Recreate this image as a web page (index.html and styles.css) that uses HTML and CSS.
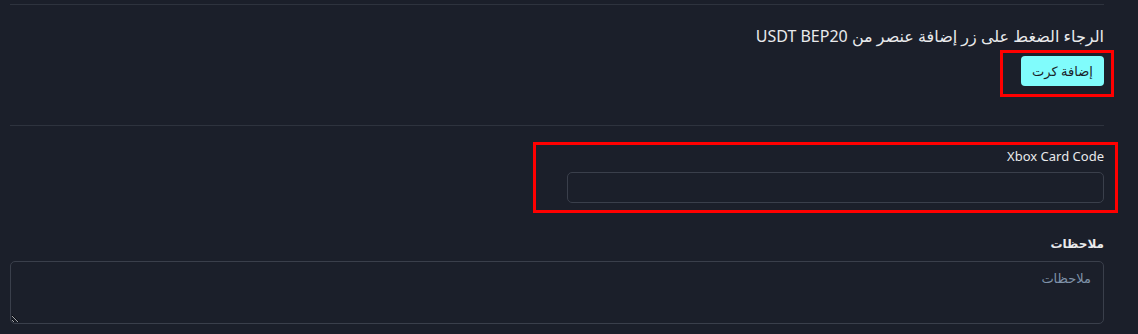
FILE: index.html
```html
<!DOCTYPE html>
<html lang="ar" dir="rtl">
<head>
<meta charset="utf-8">
<link rel="stylesheet" href="styles.css">
</head>
<body>
<div class="page">
  <hr class="divider">
  <section class="intro">
    <p class="intro-text">الرجاء الضغط على زر إضافة عنصر من USDT BEP20</p>
    <div class="mark mark-btn">
      <button class="add-btn" type="button">إضافة كرت</button>
    </div>
  </section>
  <hr class="divider">
  <div class="field mark mark-field">
    <label class="field-label">Xbox Card Code</label>
    <input class="field-input" type="text">
  </div>
  <div class="notes">
    <label class="notes-label">ملاحظات</label>
    <textarea class="notes-input" placeholder="ملاحظات"></textarea>
  </div>
</div>
</body>
</html>
```

FILE: styles.css
```css
html, body {
  margin: 0;
  padding: 0;
  background: #1b1f2a;
  height: 100%;
  overflow: hidden;
}
body {
  font-family: "Noto Sans", "DejaVu Sans", sans-serif;
  color: #e9eaec;
}
.page {
  padding: 4px 34px 0 10px;
  display: flex;
  flex-direction: column;
}
.divider {
  margin: 0;
  border: 0;
  border-top: 1px solid #2e333e;
  height: 0;
}
.intro {
  display: flex;
  flex-direction: column;
  align-items: flex-start;
  padding-top: 19px;
  padding-bottom: 39px;
}
.intro-text {
  margin: 0;
  font-size: 16px;
  line-height: 24px;
}
.mark {
  position: relative;
}
.mark::after {
  content: "";
  position: absolute;
  border: 3px solid #ff0000;
  pointer-events: none;
}
.mark-btn {
  margin-top: 8px;
}
.mark-btn::after {
  top: -6px;
  right: -10px;
  left: -21px;
  bottom: -11px;
}
.add-btn {
  display: block;
  height: 30px;
  width: 83px;
  padding: 0;
  border: 0;
  border-radius: 4px;
  background: #80fcfc;
  color: #1b1f2a;
  font-family: inherit;
  font-size: 13px;
}
.field {
  margin-top: 21px;
  align-self: flex-start;
  width: 537px;
  display: flex;
  flex-direction: column;
  gap: 7px;
}
.mark-field::after {
  top: -5px;
  right: -14px;
  left: -34px;
  bottom: -10px;
}
.field-label {
  font-size: 13px;
  line-height: 18px;
  direction: ltr;
  text-align: right;
}
.field-input {
  box-sizing: border-box;
  height: 31px;
  width: 100%;
  margin: 0;
  background: transparent;
  border: 1px solid #3a3f4b;
  border-radius: 5px;
  color: #e9eaec;
}
.notes {
  margin-top: 32px;
  display: flex;
  flex-direction: column;
  gap: 8px;
}
.notes-label {
  font-size: 12px;
  font-weight: bold;
  line-height: 18px;
}
.notes-input {
  box-sizing: border-box;
  height: 63px;
  width: 100%;
  margin: 0;
  padding: 6px 12px;
  background: transparent;
  border: 1px solid #3a3f4b;
  border-radius: 5px;
  color: #e9eaec;
  font-family: inherit;
  font-size: 13px;
  line-height: 20px;
}
.notes-input::placeholder {
  color: #7f92a8;
}
```
